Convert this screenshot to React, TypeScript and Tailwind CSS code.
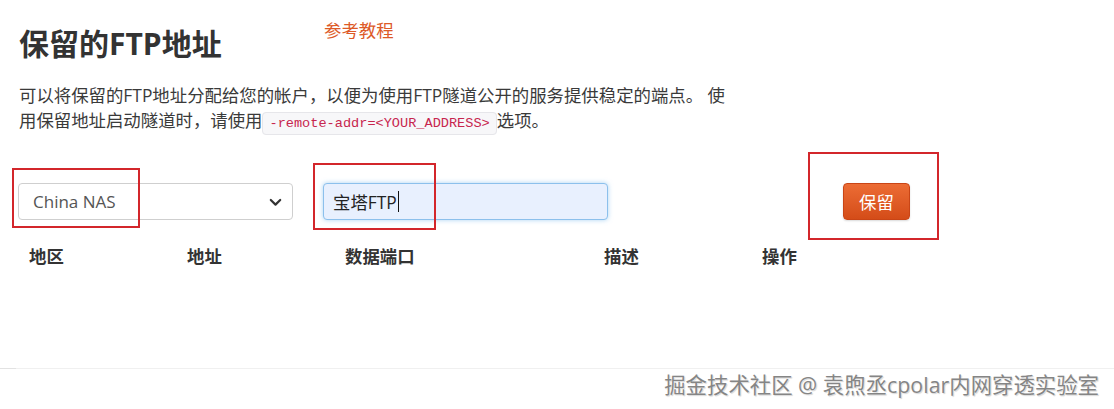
import React from "react";

const FONT = "font-['Open_Sans','Noto_Sans_CJK_SC',sans-serif]";

export default function App() {
  return (
    <div
      className={`relative flex h-[409px] w-[1114px] flex-col overflow-hidden bg-white text-[#333333] ${FONT}`}
    >
      <div className="pl-[18px]">
        <div className="flex items-start pt-[18px]">
          <h1 className="mt-[11px] w-[306px] pl-[1px] text-[30px] font-bold leading-[30px] text-[#333333]">
            保留的FTP地址
          </h1>
          <a className="text-[17.4px] leading-[25px] text-[#dd5a27]">参考教程</a>
        </div>

        <p className="mt-[24px] h-[50px] w-[780px] pl-[1px] text-[17.4px] leading-[25px] text-[#3a3a3a]">
          可以将保留的FTP地址分配给您的帐户，以便为使用FTP隧道公开的服务提供稳定的端点。 使
          <br />
          用保留地址启动隧道时，请使用
          <code className="rounded-[4px] border border-[#e6e6ea] bg-[#f7f7f9] px-[6px] py-[3px] font-['Liberation_Mono',monospace] text-[13.6px] leading-[14px] text-[#c7254e]">
            -remote-addr=&lt;YOUR_ADDRESS&gt;
          </code>
          选项。
        </p>

        <div className="mt-[50px] flex h-[37px] items-stretch">
          <div className="flex w-[275px] items-center justify-between rounded-[4px] border border-[#cfcfcf] bg-white pl-[14px] pr-[10px]">
            <span className="text-[17px] leading-[24px] text-[#555555]">China NAS</span>
            <svg width="13" height="9" viewBox="0 0 13 9" className="mt-[1px]">
              <path
                d="M1.8 2 L6.5 6.6 L11.2 2"
                fill="none"
                stroke="#333333"
                strokeWidth="2.2"
                strokeLinecap="round"
                strokeLinejoin="round"
              />
            </svg>
          </div>

          <div className="ml-[30px] flex w-[285px] items-center rounded-[4px] border border-[#8cc0ec] bg-[#e8f0fe] pl-[9px] shadow-[0_0_5px_rgba(102,175,233,0.55)]">
            <span className="text-[17.4px] leading-[24px] text-[#222222]">宝塔FTP</span>
            <span className="ml-[1px] h-[21px] w-px bg-[#111111]" />
          </div>

          <button className="ml-[235px] w-[67px] rounded-[4px] border border-[#c94516] bg-gradient-to-b from-[#ec6c34] to-[#d44c18] text-[17.4px] leading-[24px] text-white shadow-[0_1px_2px_rgba(0,0,0,0.15)]">
            保留
          </button>
        </div>

        <div className="mt-[24px] flex text-[17.4px] font-bold leading-[25px] text-[#333333]">
          <div className="w-[158px] pl-[11px]">地区</div>
          <div className="w-[158px] pl-[11px]">地址</div>
          <div className="w-[259px] pl-[11px]">数据端口</div>
          <div className="w-[158px] pl-[11px]">描述</div>
          <div className="w-[158px] pl-[11px]">操作</div>
        </div>
      </div>

      <div className="relative mt-auto h-[41px] border-t border-[#f0f0f0]">
        <div className="absolute left-0 top-[-1px] h-px w-[16px] bg-[#e2e2e2]" />
        <div className="absolute right-[15px] top-[2px] text-[21.4px] leading-[28px] text-[#858585] [text-shadow:0_0_2px_#ffffff,1px_1px_1px_rgba(0,0,0,0.2)]">
          掘金技术社区 @ 袁煦丞cpolar内网穿透实验室
        </div>
      </div>

      <div className="pointer-events-none absolute left-[12px] top-[168px] h-[60px] w-[128px] border-2 border-[#d3262b]" />
      <div className="pointer-events-none absolute left-[313px] top-[163px] h-[67px] w-[123px] border-2 border-[#d3262b]" />
      <div className="pointer-events-none absolute left-[808px] top-[152px] h-[88px] w-[131px] border-2 border-[#d3262b]" />
    </div>
  );
}
